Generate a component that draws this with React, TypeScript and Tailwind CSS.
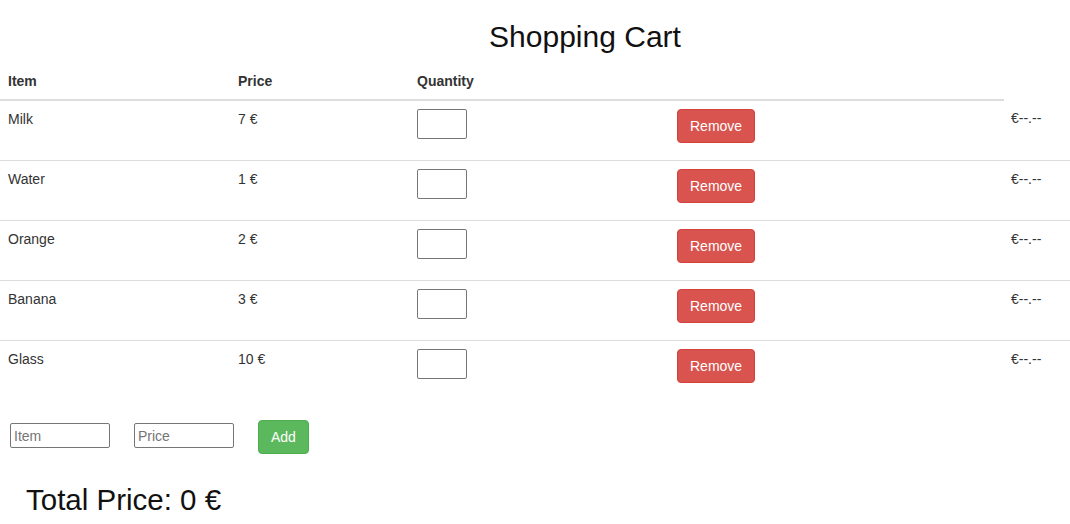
import React from 'react'

interface CartItem {
    name: string;
    price: number;
}

const items: CartItem[] = [
    { name: 'Milk', price: 7 },
    { name: 'Water', price: 1 },
    { name: 'Orange', price: 2 },
    { name: 'Banana', price: 3 },
    { name: 'Glass', price: 10 },
]

const font = { fontFamily: '"Liberation Sans", Arial, sans-serif' }

export default function App() {
    return (
        <div className="w-[1070px] min-h-[524px] bg-white text-[14px] leading-[20px] text-[#333]" style={font}>
            <h1 className="mt-[20px] mb-[10px] pl-[100px] text-center text-[30px] leading-[33px] text-[#111]">Shopping Cart</h1>

            <table className="w-full table-fixed border-collapse">
                <colgroup>
                    <col className="w-[230px]" />
                    <col className="w-[179px]" />
                    <col className="w-[260px]" />
                    <col className="w-[335px]" />
                    <col />
                </colgroup>
                <thead>
                    <tr>
                        <th className="p-[8px] text-left font-bold border-b-2 border-[#ddd]">Item</th>
                        <th className="p-[8px] text-left font-bold border-b-2 border-[#ddd]">Price</th>
                        <th className="p-[8px] text-left font-bold border-b-2 border-[#ddd]">Quantity</th>
                        <th className="p-[8px] border-b-2 border-[#ddd]"></th>
                    </tr>
                </thead>
                <tbody>
                    {items.map((item, i) => (
                        <tr key={item.name} className={i > 0 ? 'border-t border-[#ddd]' : ''}>
                            <td className="h-[60px] p-[8px] align-top">{item.name}</td>
                            <td className="p-[8px] align-top">{item.price} €</td>
                            <td className="p-[8px] align-top">
                                <input type="text" className="block w-[50px] h-[30px] border border-[#767676] rounded-[2px] bg-white" />
                            </td>
                            <td className="p-[8px] align-top">
                                <button className="h-[34px] px-[12px] rounded-[4px] bg-[#d9534f] border border-[#d43f3a] text-white">Remove</button>
                            </td>
                            <td className="p-[8px] pl-[7px] align-top">€--.--</td>
                        </tr>
                    ))}
                </tbody>
            </table>

            <div className="flex items-start gap-[24px] mt-[20px] ml-[10px]">
                <input type="text" placeholder="Item" className="mt-[3px] w-[100px] h-[25px] px-[3px] border border-[#767676] rounded-[2px] text-[14px] placeholder:text-[#757575]" />
                <input type="text" placeholder="Price" className="mt-[3px] w-[100px] h-[25px] px-[3px] border border-[#767676] rounded-[2px] text-[14px] placeholder:text-[#757575]" />
                <button className="h-[34px] px-[12px] rounded-[4px] bg-[#5cb85c] border border-[#4cae4c] text-white">Add</button>
            </div>

            <h2 className="mt-[30px] ml-[26px] text-[29.5px] leading-[32px] text-[#111]">Total Price: 0 €</h2>
        </div>
    )
}
